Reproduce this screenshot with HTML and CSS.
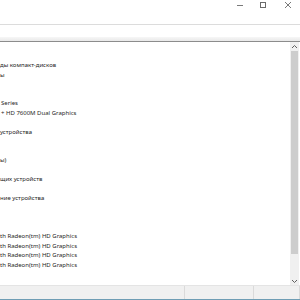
FILE: index.html
```html
<!DOCTYPE html>
<html lang="ru">
<head>
<meta charset="utf-8">
<link rel="stylesheet" href="styles.css">
</head>
<body>
<div class="window">
  <div class="titlebar">
    <span class="ctl ctl-min"><svg width="8" height="8" viewBox="0 0 8 8"><path d="M1 4.5H7" stroke="#7a7a7a" stroke-width="1"/></svg></span>
    <span class="ctl ctl-max"><svg width="8" height="8" viewBox="0 0 8 8"><rect x="1.5" y="1.5" width="5" height="5" fill="none" stroke="#6a6a6a" stroke-width="1"/></svg></span>
    <span class="ctl ctl-close"><svg width="8" height="8" viewBox="0 0 8 8"><path d="M1 1L7 7M7 1L1 7" stroke="#6a6a6a" stroke-width="0.9"/></svg></span>
  </div>
  <div class="menubar"></div>
  <div class="toolbar"></div>
  <div class="main">
    <div class="tree">
      <div class="row"></div>
      <div class="row"></div>
      <div class="row">ды компакт-дисков</div>
      <div class="row">ы</div>
      <div class="row"></div>
      <div class="row"></div>
      <div class="row child">Series</div>
      <div class="row child">+ HD 7600M Dual Graphics</div>
      <div class="row"></div>
      <div class="row">устройства</div>
      <div class="row"></div>
      <div class="row"></div>
      <div class="row">ы)</div>
      <div class="row"></div>
      <div class="row">щих устройств</div>
      <div class="row"></div>
      <div class="row">ние устройства</div>
      <div class="row"></div>
      <div class="row"></div>
      <div class="row"></div>
      <div class="row">th Radeon(tm) HD Graphics</div>
      <div class="row">th Radeon(tm) HD Graphics</div>
      <div class="row">th Radeon(tm) HD Graphics</div>
      <div class="row">th Radeon(tm) HD Graphics</div>
    </div>
    <div class="scrollbar">
      <div class="arrow arrow-up"><svg width="7" height="5" viewBox="0 0 7 5"><path d="M1 4L3.5 1.5L6 4" fill="none" stroke="#606060" stroke-width="1"/></svg></div>
      <div class="track"><div class="thumb"></div></div>
      <div class="arrow arrow-down"><svg width="7" height="5" viewBox="0 0 7 5"><path d="M1 1L3.5 3.5L6 1" fill="none" stroke="#606060" stroke-width="1"/></svg></div>
    </div>
  </div>
  <div class="statusbar">
    <div class="cell cell-main"></div>
    <div class="cell cell-mid"></div>
    <div class="cell cell-end"></div>
  </div>
</div>
</body>
</html>
```
FILE: styles.css
```css
html, body {
  margin: 0;
  padding: 0;
  background: #ffffff;
}
.window {
  width: 300px;
  height: 300px;
  display: flex;
  flex-direction: column;
  background: #ffffff;
  font-family: "Noto Sans", "Open Sans", sans-serif;
  color: #262626;
  overflow: hidden;
}
.titlebar {
  height: 24px;
  display: flex;
  justify-content: flex-end;
  align-items: flex-start;
  padding-top: 1px;
  box-sizing: border-box;
  padding-right: 8px;
}
.ctl {
  width: 8px;
  height: 8px;
  display: block;
}
.ctl svg { display: block; }
.ctl-min { margin-right: 15px; }
.ctl-max { margin-right: 17px; }
.menubar {
  height: 12px;
  border-top: 1px solid #dcdcdc;
}
.toolbar {
  height: 4px;
  background: linear-gradient(#f7f7f7, #e9e9e9);
  border-bottom: 1px solid #8c8c8c;
}
.main {
  flex: 1;
  display: flex;
  min-height: 0;
}
.tree {
  flex: 1;
  overflow: hidden;
  font-size: 6px;
}
.row {
  height: 9.5px;
  line-height: 9.5px;
  white-space: nowrap;
  padding-left: 0;
}
.row.child {
  padding-left: 1px;
}
.scrollbar {
  width: 9px;
  margin-right: 1px;
  background: #f0f0f0;
  display: flex;
  flex-direction: column;
}
.arrow {
  height: 8px;
  display: flex;
  align-items: center;
  justify-content: center;
}
.track {
  flex: 1;
  padding: 1px 1px;
}
.thumb {
  height: 203px;
  background: #cdcdcd;
}
.statusbar {
  height: 13px;
  display: flex;
  background: #f0f0f0;
  border-top: 1px solid #e4e4e4;
  border-bottom: 1px solid #6f9db4;
}
.cell {
  border-right: 1px solid #dadada;
}
.cell-main { width: 184px; }
.cell-mid { width: 68px; }
.cell-end { width: 45px; }
```
